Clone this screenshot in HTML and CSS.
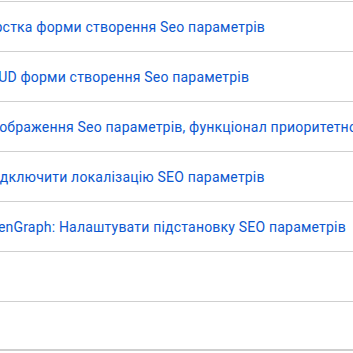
FILE: index.html
```html
<!DOCTYPE html>
<html lang="uk">
<head>
<meta charset="utf-8">
<link rel="stylesheet" href="styles.css">
</head>
<body>
<div class="table">
  <div class="row"><a class="link r1" href="#">Верстка форми створення Seo параметрів</a></div>
  <div class="row"><a class="link r2" href="#">CRUD форми створення Seo параметрів</a></div>
  <div class="row"><a class="link r3" href="#">Відображення Seo параметрів, функціонал приоритетності</a></div>
  <div class="row"><a class="link r4" href="#">Підключити локалізацію SEO параметрів</a></div>
  <div class="row"><a class="link r5" href="#">OpenGraph: Налаштувати підстановку SEO параметрів</a></div>
  <div class="row"></div>
  <div class="row last"></div>
</div>
</body>
</html>
```
FILE: styles.css
```css
html, body {
  margin: 0;
  padding: 0;
  background: #fff;
  overflow: hidden;
}
body {
  font-family: Roboto, "Liberation Sans", Arial, sans-serif;
  font-size: 14px;
  line-height: 20px;
  letter-spacing: 0.2px;
}
.table {
  padding-top: 1px;
  width: 353px;
  overflow: hidden;
}
.row {
  height: 49px;
  border-top: 1px solid #cfcfcf;
  display: flex;
  align-items: center;
  white-space: nowrap;
}
.row.last {
  height: 47px;
  border-bottom: 2px solid #cfcfcf;
}
.link {
  color: #0b57d0;
  text-decoration: none;
}
.r1 { margin-left: -22px; }
.r2 { margin-left: -20px; }
.r3 { margin-left: -22px; }
.r4 { margin-left: -14px; }
.r5 { margin-left: -20px; }
```
